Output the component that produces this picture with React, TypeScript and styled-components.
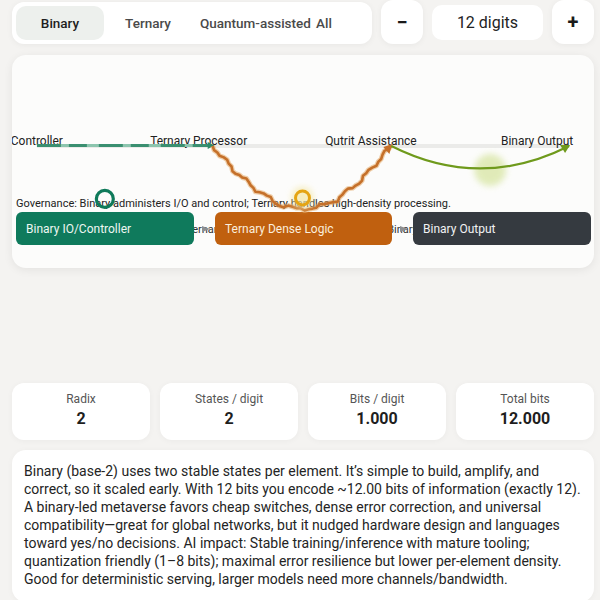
import React from "react";
import styled, { createGlobalStyle } from "styled-components";

const Global = createGlobalStyle`
  html, body { margin: 0; padding: 0; background: #f4f3f1; }
  body { font-family: Roboto, "Noto Sans", Arial, sans-serif; color: #222; overflow: hidden; }
  * { box-sizing: border-box; }
`;

const Page = styled.div`
  width: 582px;
  margin-left: 12px;
  display: flex;
  flex-direction: column;
`;

const TopRow = styled.div`
  display: flex;
  align-items: center;
  gap: 9px;
  height: 44px;
`;

const Segmented = styled.div`
  width: 360px;
  height: 42px;
  margin-top: 2px;
  background: #fff;
  border-radius: 12px;
  padding: 4px;
  display: grid;
  grid-template-columns: repeat(4, 88px);
  box-shadow: 0 1px 6px rgba(0, 0, 0, 0.05);
`;

const SegButton = styled.div<{ $active?: boolean }>`
  height: 34px;
  line-height: 34px;
  padding: 0 8px;
  text-align: center;
  white-space: nowrap;
  font-size: 13.5px;
  font-weight: 500;
  color: ${(p) => (p.$active ? "#1e1e1e" : "#4a4a4a")};
  background: ${(p) => (p.$active ? "#edf0ed" : "transparent")};
  border-radius: 10px;
`;

const SquareButton = styled.div`
  width: 42px;
  height: 44px;
  background: #fff;
  border-radius: 12px;
  display: flex;
  align-items: center;
  justify-content: center;
  font-size: 20px;
  font-weight: 700;
  color: #1a1a1a;
  box-shadow: 0 1px 6px rgba(0, 0, 0, 0.05);
`;

const DigitsBox = styled.div`
  width: 111px;
  height: 35px;
  background: #fff;
  border-radius: 10px;
  display: flex;
  align-items: center;
  justify-content: center;
  font-size: 16px;
  color: #222;
`;

const DiagramCard = styled.div`
  margin-top: 11px;
  position: relative;
  overflow: hidden;
  background: #fcfcfb;
  border-radius: 14px;
  padding: 0 3px 23px 4px;
  box-shadow: 0 2px 10px rgba(0, 0, 0, 0.07);
`;

const Canvas = styled.div`
  height: 141px;
`;

const Overlay = styled.svg`
  position: absolute;
  left: 0;
  top: 0;
  width: 100%;
  height: 200px;
  pointer-events: none;
  z-index: 3;
`;

const Governance = styled.div`
  font-size: 11px;
  line-height: 15px;
  color: #222;
  white-space: nowrap;
`;

const NodeRow = styled.div`
  margin-top: 1px;
  display: grid;
  grid-template-columns: 178px 21px 177px 21px 178px;
  height: 33px;
`;

const NodeBox = styled.div<{ $bg: string; $fg: string }>`
  position: relative;
  z-index: 1;
  background: ${(p) => p.$bg};
  color: ${(p) => p.$fg};
  border-radius: 6px;
  padding: 0 10px;
  display: flex;
  align-items: center;
  font-size: 12px;
`;

const Connector = styled.div`
  position: relative;
  display: flex;
  align-items: center;
  justify-content: center;
`;

const EdgeText = styled.span`
  position: absolute;
  left: 50%;
  top: 50%;
  transform: translate(-50%, -50%);
  font-size: 11px;
  color: #333;
  white-space: nowrap;
  z-index: 0;
`;

const ArrowMark = styled.svg`
  position: relative;
  z-index: 2;
  margin-left: 2px;
`;

const StatsRow = styled.div`
  margin-top: 115px;
  display: grid;
  grid-template-columns: repeat(4, 1fr);
  gap: 10px;
`;

const StatCard = styled.div`
  height: 57px;
  background: #fff;
  border-radius: 12px;
  display: flex;
  flex-direction: column;
  align-items: center;
  justify-content: center;
  gap: 2px;
  padding-bottom: 3px;
  box-shadow: 0 1px 6px rgba(0, 0, 0, 0.04);
`;

const StatLabel = styled.div`
  font-size: 12px;
  color: #555;
  line-height: 15px;
`;

const StatValue = styled.div`
  font-size: 16px;
  font-weight: 700;
  color: #1e1e1e;
  line-height: 20px;
`;

const InfoCard = styled.div`
  margin-top: 10px;
  background: #fff;
  border-radius: 14px;
  padding: 12px 10px 14px 12px;
  font-size: 14px;
  line-height: 18px;
  color: #242424;
  box-shadow: 0 1px 6px rgba(0, 0, 0, 0.04);
`;

function wavyPath(pts: [number, number][], amp: number, freq: number) {
  const out: string[] = [];
  let t = 0;
  for (let i = 0; i < pts.length - 1; i++) {
    const [x1, y1] = pts[i];
    const [x2, y2] = pts[i + 1];
    const len = Math.hypot(x2 - x1, y2 - y1);
    const n = Math.max(2, Math.round(len / 4));
    const nx = -(y2 - y1) / len;
    const ny = (x2 - x1) / len;
    for (let k = 0; k < n; k++) {
      const f = k / n;
      const j = Math.sin(t * freq) * amp + Math.sin(t * freq * 2.7) * amp * 0.5;
      const x = x1 + (x2 - x1) * f + nx * j;
      const y = y1 + (y2 - y1) * f + ny * j;
      out.push(`${out.length === 0 ? "M" : "L"}${x.toFixed(1)},${y.toFixed(1)}`);
      t += 1;
    }
  }
  const last = pts[pts.length - 1];
  out.push(`L${last[0]},${last[1]}`);
  return out.join(" ");
}

const orangePts: [number, number][] = [
  [201, 91],
  [222, 115],
  [245, 135],
  [268, 150],
  [285, 154],
  [305, 153],
  [325, 145],
  [350, 125],
  [380, 91],
];

function Diagram() {
  const orange = wavyPath(orangePts, 1.5, 0.9);
  return (
    <Overlay viewBox="0 0 583 200">
      <defs>
        <filter id="blur6" x="-50%" y="-50%" width="200%" height="200%">
          <feGaussianBlur stdDeviation="3" />
        </filter>
      </defs>
      <line x1="25" y1="91" x2="558" y2="91" stroke="#ebebe9" strokeWidth="4" />
      <g fontFamily="Roboto, Arial, sans-serif" fontSize="12" fill="#222">
        <text x="51" y="89.5" textAnchor="end">Binary IO/Controller</text>
        <text x="187" y="89.5" textAnchor="middle">Ternary Processor</text>
        <text x="359.5" y="89.5" textAnchor="middle">Qutrit Assistance</text>
        <text x="526" y="89.5" textAnchor="middle">Binary Output</text>
      </g>
      {/* green edge */}
      <line x1="25" y1="90.5" x2="198" y2="90.5" stroke="#8cc5ae" strokeWidth="3" />
      <line x1="25" y1="90.5" x2="198" y2="90.5" stroke="#3a8f70" strokeWidth="3" strokeDasharray="24 8 18 12" />
      <path d="M196,87 L203,90.5 L196,94 Z" fill="#2f8a69" />
      {/* orange edge */}
      <path d={orange} fill="none" stroke="#e4a765" strokeWidth="5" strokeOpacity="0.55" strokeLinejoin="round" />
      <path d={orange} fill="none" stroke="#c5702a" strokeWidth="2.6" strokeLinejoin="round" />
      <path d="M372,92 L381,89 L378,99 Z" fill="#c5702a" />
      {/* olive edge */}
      <circle cx="479" cy="115" r="16" fill="#dce8ad" opacity="0.85" filter="url(#blur6)" />
      <path d="M380,91 Q469,136 558,91" fill="none" stroke="#6f9a1c" strokeWidth="2.2" />
      <path d="M549,90 L559,90 L554,98 Z" fill="#6f9a1c" />
      {/* tokens */}
      <circle cx="291" cy="143" r="11" fill="#f3e7a6" opacity="0.7" filter="url(#blur6)" />
      <circle cx="291" cy="143" r="7" fill="none" stroke="#e5a514" strokeWidth="3" />
      <circle cx="93" cy="144" r="8.5" fill="none" stroke="#0f7a5a" strokeWidth="3.2" />
    </Overlay>
  );
}

function Arrow() {
  return (
    <ArrowMark width="10" height="10" viewBox="0 0 10 10">
      <path d="M1,2 L9,5 L1,8 Z" fill="#8d8f91" />
    </ArrowMark>
  );
}

export default function App() {
  const stats = [
    { label: "Radix", value: "2" },
    { label: "States / digit", value: "2" },
    { label: "Bits / digit", value: "1.000" },
    { label: "Total bits", value: "12.000" },
  ];
  return (
    <>
      <Global />
      <Page>
        <TopRow>
          <Segmented>
            <SegButton $active>Binary</SegButton>
            <SegButton>Ternary</SegButton>
            <SegButton>Quantum-assisted</SegButton>
            <SegButton>All</SegButton>
          </Segmented>
          <SquareButton>−</SquareButton>
          <DigitsBox>12 digits</DigitsBox>
          <SquareButton>+</SquareButton>
        </TopRow>

        <DiagramCard>
          <Diagram />
          <Canvas />
          <Governance>
            Governance: Binary administers I/O and control; Ternary handles high-density processing.
          </Governance>
          <NodeRow>
            <NodeBox $bg="#0f7a5c" $fg="#eef7f2">Binary IO/Controller</NodeBox>
            <Connector>
              <EdgeText>Ternary</EdgeText>
              <Arrow />
            </Connector>
            <NodeBox $bg="#c0600f" $fg="#fbeedd">Ternary Dense Logic</NodeBox>
            <Connector>
              <EdgeText>Binary</EdgeText>
              <Arrow />
            </Connector>
            <NodeBox $bg="#353a40" $fg="#f1f2f3">Binary Output</NodeBox>
          </NodeRow>
        </DiagramCard>

        <StatsRow>
          {stats.map((s) => (
            <StatCard key={s.label}>
              <StatLabel>{s.label}</StatLabel>
              <StatValue>{s.value}</StatValue>
            </StatCard>
          ))}
        </StatsRow>

        <InfoCard>
          Binary (base-2) uses two stable states per element. It’s simple to build, amplify, and
          correct, so it scaled early. With 12 bits you encode ~12.00 bits of information (exactly
          12). A binary-led metaverse favors cheap switches, dense error correction, and universal
          compatibility—great for global networks, but it nudged hardware design and languages
          toward yes/no decisions. AI impact: Stable training/inference with mature tooling;
          quantization friendly (1–8 bits); maximal error resilience but lower per-element density.
          Good for deterministic serving, larger models need more channels/bandwidth.
        </InfoCard>
      </Page>
    </>
  );
}
